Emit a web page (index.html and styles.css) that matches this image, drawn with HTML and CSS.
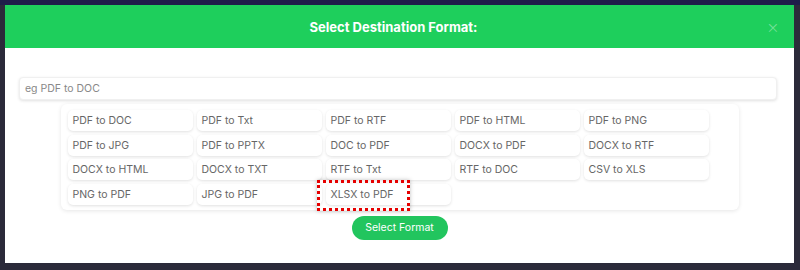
FILE: index.html
```html
<!DOCTYPE html>
<html lang="en">
<head>
    <meta charset="UTF-8">
    <meta name="viewport" content="width=device-width, initial-scale=1.0">
    <title>Select Destination Format</title>
    <link rel="stylesheet" href="styles.css">
</head>
<body>

    <div class="modal">
        <div class="modal-header">
            <h2>Select Destination Format:</h2>
            <span class="close-btn">&times;</span>
        </div>

        <div class="modal-body">
            <input type="text" class="search-box" placeholder="eg PDF to DOC">

            <div class="format-list">
                <button class="format">PDF to DOC</button>
                <button class="format">PDF to Txt</button>
                <button class="format">PDF to RTF</button>
                <button class="format">PDF to HTML</button>
                <button class="format">PDF to PNG</button>
                <button class="format">PDF to JPG</button>
                <button class="format">PDF to PPTX</button>
                <button class="format">DOC to PDF</button>
                <button class="format">DOCX to PDF</button>
                <button class="format">DOCX to RTF</button>
                <button class="format">DOCX to HTML</button>
                <button class="format">DOCX to TXT</button>
                <button class="format">RTF to Txt</button>
                <button class="format">RTF to DOC</button>
                <button class="format">CSV to XLS</button>
                <button class="format">PNG to PDF</button>
                <button class="format">JPG to PDF</button>
                <button class="format marked">XLSX to PDF<span class="highlight"></span></button>
            </div>

            <button class="select-btn">Select Format</button>
        </div>
    </div>

</body>
</html>
```

FILE: styles.css
```css
/* Reset */
* {
    margin: 0;
    padding: 0;
    box-sizing: border-box;
    font-family: Inter, "Open Sans", sans-serif;
}

body {
    background: #2b2a3a;
    border-top: 5px solid #1f1d4a;
    padding: 0 6px 6px 5px;
    height: 270px;
}

/* Modal */
.modal {
    background: #fff;
    height: 258px;
    display: flex;
    flex-direction: column;
}

.modal-header {
    background: #1ecf5c;
    height: 43px;
    display: flex;
    align-items: center;
    justify-content: center;
    position: relative;
}

.modal-header h2 {
    color: #fff;
    font-size: 13px;
    font-weight: 700;
    margin-right: 12px;
}

.close-btn {
    position: absolute;
    right: 15px;
    top: 12px;
    color: rgba(255, 255, 255, 0.4);
    font-size: 19px;
    font-weight: 200;
    line-height: 1;
}

/* Body */
.modal-body {
    padding: 29px 17px 0 14px;
    display: flex;
    flex-direction: column;
    align-items: center;
}

.search-box {
    width: 100%;
    height: 23px;
    border: 1px solid #f0f0f0;
    border-radius: 4px;
    box-shadow: 0 1px 3px rgba(0, 0, 0, 0.12);
    padding: 0 5px;
    font-size: 10.5px;
    color: #666;
    outline: none;
}

.search-box::placeholder {
    color: #888;
}

.format-list {
    width: 678px;
    margin: 4px 0 0 3px;
    padding: 6px 7px 5px;
    display: grid;
    grid-template-columns: repeat(5, 125px);
    gap: 3.5px 4px;
    border-radius: 6px;
    box-shadow: 0 1px 4px rgba(0, 0, 0, 0.1);
}

.format {
    height: 21px;
    border: none;
    background: #fff;
    border-radius: 5px;
    box-shadow: 0 1px 3px rgba(0, 0, 0, 0.12);
    text-align: left;
    padding: 0 5px;
    font-size: 10.5px;
    color: #666;
    cursor: pointer;
}

.marked {
    position: relative;
}

.highlight {
    position: absolute;
    left: -9px;
    top: -4px;
    width: 93px;
    height: 31px;
    border: 3.5px dotted #e60000;
    box-shadow: 0 0 4px rgba(0, 0, 0, 0.25);
}

.select-btn {
    margin-top: 6px;
    margin-left: 3px;
    width: 96px;
    height: 24px;
    border: none;
    border-radius: 12px;
    background: #22c55e;
    color: #fff;
    font-size: 10.5px;
    cursor: pointer;
}
```
